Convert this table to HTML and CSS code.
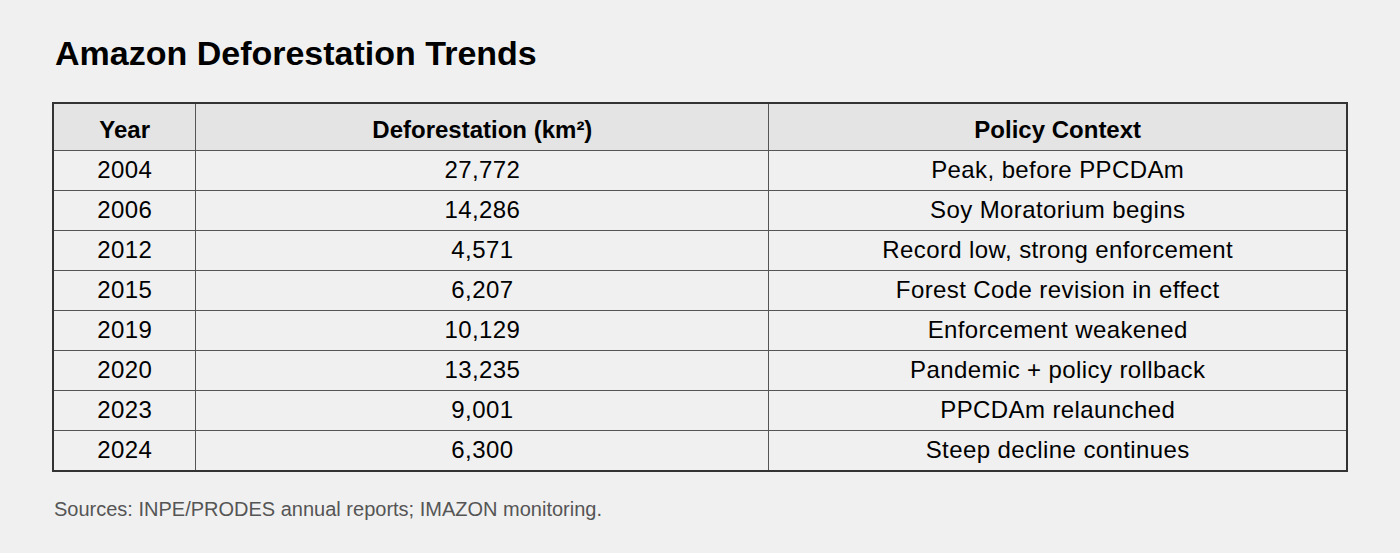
FILE: index.html
```html
<!DOCTYPE html>
<html>
<head>
<meta charset="utf-8">
<link rel="stylesheet" href="styles.css">
</head>
<body>
<div class="page">
  <h1 class="title">Amazon Deforestation Trends</h1>
  <table class="data">
    <colgroup>
      <col class="c-year">
      <col class="c-def">
      <col class="c-pol">
    </colgroup>
    <thead>
      <tr><th>Year</th><th>Deforestation (km²)</th><th>Policy Context</th></tr>
    </thead>
    <tbody>
      <tr><td>2004</td><td>27,772</td><td>Peak, before PPCDAm</td></tr>
      <tr><td>2006</td><td>14,286</td><td>Soy Moratorium begins</td></tr>
      <tr><td>2012</td><td>4,571</td><td>Record low, strong enforcement</td></tr>
      <tr><td>2015</td><td>6,207</td><td>Forest Code revision in effect</td></tr>
      <tr><td>2019</td><td>10,129</td><td>Enforcement weakened</td></tr>
      <tr><td>2020</td><td>13,235</td><td>Pandemic + policy rollback</td></tr>
      <tr><td>2023</td><td>9,001</td><td>PPCDAm relaunched</td></tr>
      <tr><td>2024</td><td>6,300</td><td>Steep decline continues</td></tr>
    </tbody>
  </table>
  <p class="sources">Sources: INPE/PRODES annual reports; IMAZON monitoring.</p>
</div>
</body>
</html>
```
FILE: styles.css
```css
html, body {
  margin: 0;
  padding: 0;
  background: #f0f0f0;
}
body {
  font-family: "Liberation Sans", Arial, sans-serif;
  color: #000;
}
.page {
  padding: 33px 52px 0 52px;
}
.title {
  margin: 0 0 29px 3px;
  font-size: 34px;
  font-weight: bold;
  line-height: 40px;
}
.data {
  width: 1296px;
  border-collapse: collapse;
  border: 2px solid #333;
  font-size: 24px;
  letter-spacing: 0.4px;
}
.c-year { width: 143px; }
.c-def { width: 574px; }
.c-pol { width: 579px; }
.data th, .data td {
  border: 1px solid #555;
  text-align: center;
}
.data th {
  background: #e4e4e4;
  font-weight: bold;
  letter-spacing: 0;
  line-height: 32px;
  padding: 10px 0 4px;
}
.data td {
  line-height: 37px;
  padding: 0 0 2px;
}
.sources {
  margin: 25px 0 0 2px;
  font-size: 20px;
  line-height: 24px;
  color: #555;
}
```
